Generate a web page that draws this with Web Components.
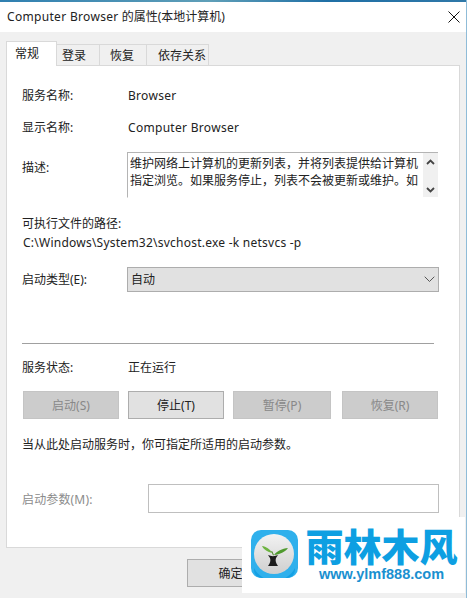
<!DOCTYPE html>
<html lang="zh"><head><meta charset="utf-8"><title>Computer Browser</title>
<style>
html,body{margin:0;padding:0;background:#fff}
body{font:12px/16px "Noto Sans","Noto Sans CJK SC",sans-serif;color:#1a1a1a;width:470px;height:598px;overflow:hidden}
</style></head><body>
<svc-dialog caption-latin="Computer Browser" caption-cjk=" 的属性(本地计算机)">
  <svc-tabs slot="tabs"></svc-tabs>
  <svc-row mt="21" label="服务名称:"><svc-val>Browser</svc-val></svc-row>
  <svc-row mt="16" label="显示名称:"><svc-val>Computer Browser</svc-val></svc-row>
  <svc-row mt="17" label="描述:" top="7"><svc-desc>维护网络上计算机的更新列表，并将列表提供给计算机指定浏览。如果服务停止，列表不会被更新或维护。如</svc-desc></svc-row>
  <svc-text mt="17">可执行文件的路径:</svc-text>
  <svc-text mt="4" latin>C:\Windows\System32\svchost.exe -k netsvcs -p</svc-text>
  <svc-row mt="16" label="启动类型(E):" top="4"><svc-select>自动</svc-select></svc-row>
  <svc-rule></svc-rule>
  <svc-row mt="15" label="服务状态:"><svc-val cjk>正在运行</svc-val></svc-row>
  <svc-actions>
    <svc-btn disabled>启动(S)</svc-btn>
    <svc-btn>停止(T)</svc-btn>
    <svc-btn disabled wide>暂停(P)</svc-btn>
    <svc-btn disabled>恢复(R)</svc-btn>
  </svc-actions>
  <svc-text mt="17">当从此处启动服务时，你可指定所适用的启动参数。</svc-text>
  <svc-param label="启动参数(M):"></svc-param>
  <svc-btn slot="footer" ok>确定</svc-btn>
  <svc-mark slot="overlay"></svc-mark>
</svc-dialog>
<script>
function def(name, css, html, init){
  customElements.define(name, class extends HTMLElement{
    connectedCallback(){
      if(this.shadowRoot) return;
      const r=this.attachShadow({mode:'open'});
      r.innerHTML='<style>'+css+'</style>'+(typeof html==='function'?html(this):html);
      if(init) init(this,r);
    }
  });
}
const mt=(el)=>{ if(el.hasAttribute('mt')) el.style.marginTop=el.getAttribute('mt')+'px'; };

def('svc-dialog',`
  :host{display:block;width:470px;height:598px;position:relative;overflow:hidden;background:#fff}
  .win{width:466px;height:598px;background:#f0f0f0;border-right:1px solid #8fbcd8;display:flex;flex-direction:column}
  .edge{height:2px;background:linear-gradient(90deg,#2f7fb0,#5f9fb8 45%,#1f6fa5 70%,#2f78a8)}
  .bar{height:30px;background:#fff;display:flex;align-items:center;justify-content:space-between;padding:0 6px 0 7px;color:#222}
  .bar svg{display:block}
  .bar b{font-weight:400;letter-spacing:.32px}
  .tabs{height:33px;display:flex;align-items:flex-end;padding-left:6px}
  .panel{margin-left:6px;width:454px;height:483px;background:#fff;border:1px solid #d9d9d9;padding:0 0 0 15px;box-sizing:border-box}
  .foot{padding:11px 0 0 187px}
`,(h)=>`<div class="win">
   <div class="edge"></div>
   <div class="bar"><span><b>${h.getAttribute('caption-latin')}</b>${h.getAttribute('caption-cjk')}</span>
     <svg width="12" height="12" viewBox="0 0 12 12"><path d="M.5.5l11 11M11.500.5l-11 11" stroke="#111" stroke-width="1" fill="none"/></svg></div>
   <div class="tabs"><slot name="tabs"></slot></div>
   <div class="panel"><slot></slot></div>
   <div class="foot"><slot name="footer"></slot></div>
 </div><slot name="overlay"></slot>`);

def('svc-tabs',`
  :host{display:flex;align-items:flex-end;position:relative;z-index:1;margin-bottom:-1px}
  span{display:block;box-sizing:border-box;height:22px;line-height:21px;background:#f0f0f0;border:1px solid #d9d9d9;border-left:0;color:#222}
  .on{height:25px;line-height:23px;background:#fff;border-left:1px solid #d9d9d9;border-bottom:0;width:51px;padding-left:8px}
`,`<span class="on">常规</span><span style="width:43px;padding-left:5px">登录</span><span style="width:47px;padding-left:10px">恢复</span><span style="width:62px;padding-left:11px">依存关系</span>`);

def('svc-row',`
  :host{display:grid;grid-template-columns:105px 1fr;margin-right:21px}
  .l{color:#222;line-height:18px;height:16px}
`,(h)=>`<div class="l" style="padding-top:${h.getAttribute('top')||0}px">${h.getAttribute('label')}</div><div><slot></slot></div>`,mt);

def('svc-val',`
  :host{display:block;height:16px;line-height:18px;padding-left:1px;letter-spacing:.3px;color:#222}
  :host([cjk]){letter-spacing:0}
`,`<slot></slot>`);

def('svc-text',`
  :host{display:block;height:16px;line-height:18px;color:#222}
  :host([latin]){letter-spacing:.24px;padding-left:1px;line-height:16px}
`,`<slot></slot>`,mt);

def('svc-desc',`
  :host{display:flex;height:46px;box-sizing:border-box;border:1px solid #b4b4b4;border-right:0;border-bottom-color:#fff;background:#fff;width:311px}
  .t{flex:1;height:44px;overflow:hidden;box-sizing:border-box;padding:2px 4px 0 2px;line-height:17px;color:#222}
  .s{width:15px;height:44px;background:#f0f0f0;display:flex;flex-direction:column;justify-content:space-between;align-items:center;padding:6px 0 4px;box-sizing:border-box}
  svg{display:block}
`,`<div class="t"><slot></slot></div><div class="s">
  <svg width="9" height="6" viewBox="0 0 9 6"><path d="M1 5l3.500-3.500L8 5" stroke="#444" stroke-width="1.800" fill="none"/></svg>
  <svg width="9" height="6" viewBox="0 0 9 6"><path d="M1 1l3.500 3.500L8 1" stroke="#444" stroke-width="1.800" fill="none"/></svg></div>`);

def('svc-select',`
  :host{display:flex;align-items:center;justify-content:space-between;box-sizing:border-box;height:25px;width:312px;background:#e1e1e1;border:1px solid #adadad;padding:0 3px;color:#222}
  svg{display:block}
`,`<span><slot></slot></span><svg width="11" height="7" viewBox="0 0 11 7"><path d="M.7.7l4.800 4.800L10.300.7" stroke="#555" stroke-width="1" fill="none"/></svg>`);

def('svc-rule',`:host{display:block;height:1px;width:412px;background:#a0a0a0;margin-top:51px}`,``);

def('svc-actions',`:host{display:flex;margin:16px 0 0 1px}`,`<slot></slot>`);

def('svc-btn',`
  :host{display:flex;align-items:center;justify-content:center;box-sizing:border-box;width:96px;height:28px;padding-top:1px;background:#e1e1e1;border:1px solid #adadad;color:#222;margin-right:9px;flex:none}
  :host([disabled]){background:#ccc;border-color:#c4c4c4;color:#888}
  :host([wide]){width:98px;margin-right:11px}
  :host([ok]){width:87px;margin-right:0}
`,`<slot></slot>`);

def('svc-param',`
  :host{display:grid;grid-template-columns:126px 1fr;align-items:center;margin-top:32px;color:#8c8c8c}
  .l{letter-spacing:.15px;padding-top:2px}
  .i{box-sizing:border-box;width:291px;height:29px;background:#fff;border:1px solid #bfbfbf}
`,(h)=>`<div class="l">${h.getAttribute('label')}</div><div class="i"></div>`);

def('svc-mark',`
  :host{position:absolute;left:242px;top:517px;width:223px;height:76px;background:#fff;display:flex;padding:13px 0 0 9px;box-sizing:border-box;gap:7px}
  svg{display:block;flex:none}
  .n{display:flex;flex-direction:column;align-items:center;width:153px}
  .a{font:900 38px/29px "Noto Sans CJK SC",sans-serif;color:#0d9fe2;white-space:nowrap;height:37px}
  .b{font:bold 14.500px/14px "Liberation Sans",sans-serif;color:#1a90d0;white-space:nowrap}
`,`<svg width="47" height="48" viewBox="0 0 47 48">
  <defs><linearGradient id="g" x1="0" y1="0" x2="0" y2="1"><stop offset="0" stop-color="#f2f2f2"/><stop offset="1" stop-color="#cfcfcf"/></linearGradient></defs>
  <rect width="47" height="48" rx="10" fill="#2fb0ec"/>
  <path d="M3 38a23 23 0 0 0 41 0v2a8 8 0 0 1-8 8H11a8 8 0 0 1-8-8z" fill="#14a0e4"/>
  <circle cx="23" cy="24" r="20" fill="url(#g)"/>
  <path d="M17 25c3 1.500 7 1.500 10 0l-2 3c-1 3 0 5 2 8H17c2-3 3-5 2-8z" fill="#1c1c1c"/>
  <path d="M23 25c-.5-1-1-2.500-2-4l-1 .500c1 1.500 1.500 2.500 2 4z" fill="#4f8a2e"/>
  <path d="M21 23c-2-4-6-6.500-10-7 1.500 3.500 6 6 10 7z" fill="#6cb33f"/>
  <path d="M23 25c3-4 8-6.500 14-7-3 4-8 6.500-14 7z" fill="#4f9a2e"/>
</svg><div class="n"><div class="a">雨林木风</div><div class="b">www.ylmf888.com</div></div>`);
</script>
</body></html>
